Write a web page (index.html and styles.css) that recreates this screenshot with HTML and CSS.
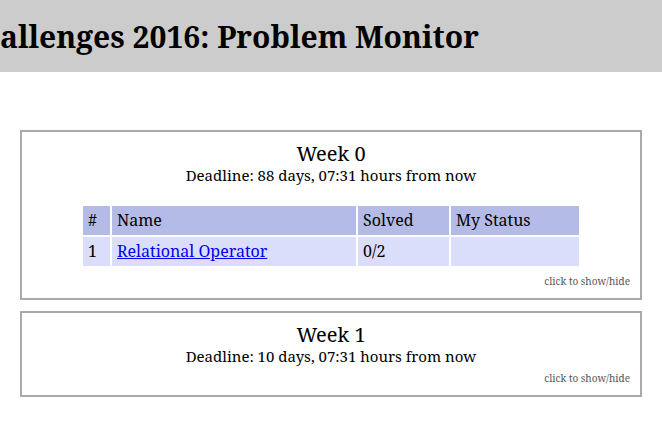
FILE: index.html
```html
<!DOCTYPE html>
<html>
<head>
<meta charset="utf-8">
<link rel="stylesheet" href="styles.css">
</head>
<body>
<header class="top">
  <h1 class="title">allenges 2016: Problem Monitor</h1>
</header>
<main class="weeks">
  <section class="week">
    <div class="week-name">Week 0</div>
    <div class="deadline">Deadline: 88 days, 07:31 hours from now</div>
    <table class="problems">
      <thead>
        <tr><th class="c-num">#</th><th class="c-name">Name</th><th class="c-solved">Solved</th><th class="c-status">My Status</th></tr>
      </thead>
      <tbody>
        <tr><td>1</td><td><a href="#">Relational Operator</a></td><td>0/2</td><td></td></tr>
      </tbody>
    </table>
    <div class="toggle">click to show/hide</div>
  </section>
  <section class="week">
    <div class="week-name">Week 1</div>
    <div class="deadline">Deadline: 10 days, 07:31 hours from now</div>
    <div class="toggle">click to show/hide</div>
  </section>
</main>
</body>
</html>
```
FILE: styles.css
```css
html, body {
  margin: 0;
  padding: 0;
  background: #fff;
  font-family: "Noto Serif", "DejaVu Serif", serif;
  color: #000;
}
.top {
  background: #ccc;
  height: 72px;
  display: flex;
  align-items: center;
  overflow: hidden;
}
.title {
  margin: 0;
  font-size: 30px;
  font-weight: bold;
  white-space: nowrap;
}
.weeks {
  padding: 58px 20px 0;
  display: flex;
  flex-direction: column;
  gap: 11px;
}
.week {
  border: 2px solid #aaa;
  padding: 10px 10px 10px;
  text-align: center;
}
.week-name {
  font-size: 20px;
  line-height: 24px;
}
.deadline {
  font-size: 15px;
  line-height: 18px;
}
.problems {
  margin: 20px auto 1px;
  border-spacing: 2px;
  font-size: 16px;
  text-align: left;
}
.problems th, .problems td {
  padding: 4px 5px;
  font-weight: normal;
  height: 21px;
  line-height: 21px;
}
.problems th { background: #b3bbe6; }
.problems td { background: #dbdefa; }
.c-num { width: 17px; }
.c-name { width: 234px; }
.c-solved { width: 81px; }
.c-status { width: 118px; }
.problems a { color: #00e; }
.toggle {
  text-align: right;
  font-size: 10px;
  line-height: 14px;
  color: #555;
  margin-top: 6px;
}
```
